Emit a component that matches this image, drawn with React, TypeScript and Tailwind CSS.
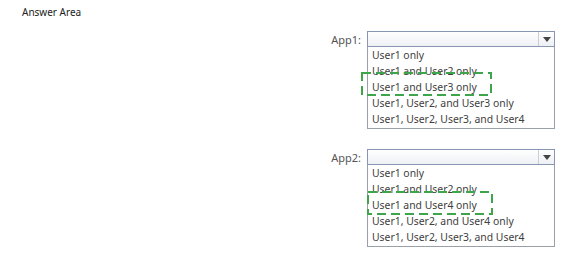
import React from "react";

const font = { fontFamily: '"Noto Sans", "Open Sans", sans-serif' };

interface Block {
    label: string,
    options: string[],
    pick: number,
    boxLeft: number,
    boxTop: number,
    boxWidth: number,
}

const blocks: Block[] = [
    {
        label: "App1:",
        options: ["User1 only", "User1 and User2 only", "User1 and User3 only", "User1, User2, and User3 only", "User1, User2, User3, and User4"],
        pick: 2,
        boxLeft: -11,
        boxTop: -7,
        boxWidth: 131,
    },
    {
        label: "App2:",
        options: ["User1 only", "User1 and User2 only", "User1 and User4 only", "User1, User2, and User4 only", "User1, User2, User3, and User4"],
        pick: 2,
        boxLeft: -5,
        boxTop: -6,
        boxWidth: 126,
    },
];

const DashedBox = ({left, top, width}: { left: number, top: number, width: number }) => (
    <svg className="absolute pointer-events-none" style={{left, top}} width={width} height={25}>
        <rect x={1} y={1} width={width - 2} height={22} fill="none" stroke="#3ea54a" strokeWidth={2}
              strokeDasharray="9 5"/>
    </svg>
);

const Dropdown = ({block}: { block: Block }) => (
    <div className="flex flex-row items-start justify-end pr-[16px]">
        <span className="text-[11px] text-[#555] mr-[6px] mt-[1px] leading-[16px]">{block.label}</span>
        <div className="w-[188px] flex flex-col">
            <div className="h-[16px] border border-[#8896b4] bg-gradient-to-b from-white to-[#eef0f4] flex flex-row justify-end">
                <div className="w-[16px] border-l border-[#c9ced8] flex items-center justify-center">
                    <svg width="8" height="5" viewBox="0 0 8 5">
                        <path d="M0 0 H8 L4 5 Z" fill="#444"/>
                    </svg>
                </div>
            </div>
            <div className="border border-t-0 border-[#9aa0a8] bg-white pl-[4px] pb-[1px]">
                {block.options.map((o, i) => (
                    <div key={o} className="relative h-[16px] leading-[16px] text-[10.4px] text-[#404040] whitespace-nowrap">
                        {i === block.pick && <DashedBox left={block.boxLeft} top={block.boxTop} width={block.boxWidth}/>}
                        {o}
                    </div>
                ))}
            </div>
        </div>
    </div>
);

export default function App() {
    return (
        <div className="w-[571px] h-[257px] bg-white relative" style={font}>
            <div className="pl-[22px] pt-[5px] text-[10px] text-[#222] leading-[14px]">Answer Area</div>
            <div className="mt-[12px]">
                <Dropdown block={blocks[0]}/>
            </div>
            <div className="mt-[20px]">
                <Dropdown block={blocks[1]}/>
            </div>
        </div>
    );
}
